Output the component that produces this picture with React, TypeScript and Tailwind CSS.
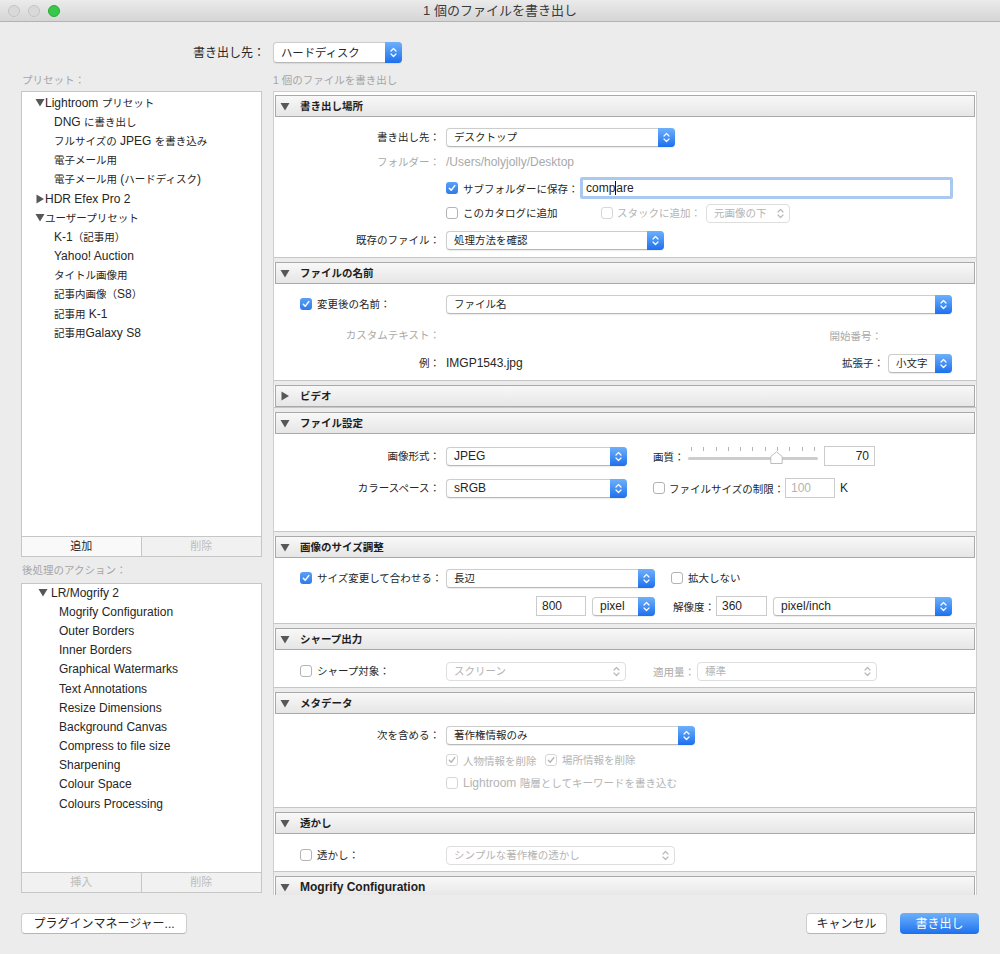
import React from "react";

type Kids = { children?: React.ReactNode };

// Japanese runs are set a little smaller than Latin, as in the macOS dialog
function M({ t }: { t: string }) {
  const parts = t.split(/([\u3000-\u30ff\u4e00-\u9fff\uff00-\uffef]+)/);
  return (
    <>
      {parts.map((p, i) =>
        i % 2 === 1 ? (
          <span key={i} className="text-[0.875em]">
            {p}
          </span>
        ) : (
          <React.Fragment key={i}>{p}</React.Fragment>
        )
      )}
    </>
  );
}

function Stepper({ disabled }: { disabled?: boolean }) {
  return (
    <div
      className={
        disabled
          ? "w-[17px] self-stretch flex items-center justify-center"
          : "w-[17px] -my-px -mr-px self-stretch rounded-r-[4px] bg-linear-to-b from-[#6db0fa] to-[#1b6fee] flex items-center justify-center"
      }
    >
      <svg width="7" height="11" viewBox="0 0 7 11" fill="none" stroke={disabled ? "#b9b9b9" : "#ffffff"} strokeWidth="1.2" strokeLinecap="round" strokeLinejoin="round">
        <path d="M1 4 3.5 1.5 6 4" />
        <path d="M1 7 3.5 9.5 6 7" />
      </svg>
    </div>
  );
}

function Popup({ w, label, disabled, tall }: { w: string; label: string; disabled?: boolean; tall?: boolean }) {
  return (
    <div
      className={`${w} ${tall ? "h-[21px]" : "h-[19px]"} shrink-0 flex items-center rounded-[4px] bg-white border ${
        disabled ? "border-[#dedede] text-[#b4b4b4]" : "border-[#cdcdcd] border-b-[#b8b8b8] text-[#262626] shadow-[0_0.5px_1px_rgba(0,0,0,0.08)]"
      }`}
    >
      <span className={`flex-1 pl-[7px] whitespace-nowrap ${tall ? "text-[13px]" : "text-[12px]"}`}>
        <M t={label} />
      </span>
      <Stepper disabled={disabled} />
    </div>
  );
}

function Check({ checked, disabled }: { checked?: boolean; disabled?: boolean }) {
  if (checked && !disabled) {
    return (
      <div className="w-[12px] h-[12px] shrink-0 rounded-[3px] bg-linear-to-b from-[#5aa0f7] to-[#2c7be9] flex items-center justify-center">
        <svg width="10" height="10" viewBox="0 0 10 10" fill="none" stroke="#fff" strokeWidth="1.5" strokeLinecap="round" strokeLinejoin="round">
          <path d="M2.3 5.3 4.2 7.3 7.8 2.6" />
        </svg>
      </div>
    );
  }
  return (
    <div
      className={`w-[12px] h-[12px] shrink-0 rounded-[3px] bg-white border flex items-center justify-center ${
        disabled ? "border-[#d6d6d6]" : "border-[#b3b3b3]"
      }`}
    >
      {checked && (
        <svg width="10" height="10" viewBox="0 0 10 10" fill="none" stroke="#b4b4b4" strokeWidth="1.4" strokeLinecap="round" strokeLinejoin="round">
          <path d="M2.3 5.3 4.2 7.3 7.8 2.6" />
        </svg>
      )}
    </div>
  );
}

function Field({ w, value, right, muted }: { w: string; value: string; right?: boolean; muted?: boolean }) {
  return (
    <div
      className={`${w} h-[20px] shrink-0 bg-white border border-[#cbcbcb] flex items-center px-[5px] text-[12px] ${right ? "justify-end" : ""} ${
        muted ? "text-[#b3b3b3]" : "text-[#262626]"
      }`}
    >
      {value}
    </div>
  );
}

function Label({ t, gray }: { t: string; gray?: boolean }) {
  return (
    <div className={`w-[166px] shrink-0 text-right text-[12px] whitespace-nowrap ${gray ? "text-[#a9a9a9]" : "text-[#262626]"}`}>
      <M t={t} />
    </div>
  );
}

function Txt({ t, cls = "" }: { t: string; cls?: string }) {
  return (
    <span className={`text-[12px] whitespace-nowrap shrink-0 ${cls}`}>
      <M t={t} />
    </span>
  );
}

function Tri({ open }: { open?: boolean }) {
  return open ? (
    <svg width="10" height="9" viewBox="0 0 10 9">
      <path d="M0.5 1 9.5 1 5 8.5Z" fill="#575757" />
    </svg>
  ) : (
    <svg width="10" height="10" viewBox="0 0 10 10">
      <path d="M1.5 0.5 9 5 1.5 9.5Z" fill="#575757" />
    </svg>
  );
}

function Section({ title, open = true, body, children }: Kids & { title: string; open?: boolean; body: string }) {
  return (
    <div>
      <div className="mx-[1px] h-[22px] border border-[#a9a9a9] bg-linear-to-b from-[#f8f8f8] to-[#e6e6e6] flex items-center pl-[4px]">
        <Tri open={open} />
        <span className="ml-[10px] mb-[1px] text-[12px] leading-[14px] font-bold text-[#1e1e1e] whitespace-nowrap">
          <M t={title} />
        </span>
      </div>
      {open && <div className={body}>{children}</div>}
      <div className="h-[5px] border-t border-[#c6c6c6] bg-[#ececec]" />
    </div>
  );
}

function Row({ h, children }: Kids & { h: string }) {
  return <div className={`${h} flex items-center`}>{children}</div>;
}

function Slider() {
  const ticks = Array.from({ length: 11 });
  return (
    <div className="relative w-[130px] h-[20px] shrink-0">
      <div className="absolute left-[3px] right-[3px] top-[1px] flex justify-between">
        {ticks.map((_, i) => (
          <span key={i} className="w-px h-[4px] bg-[#b4b4b4]" />
        ))}
      </div>
      <div className="absolute left-0 right-0 top-[11px] h-[3px] rounded-full bg-[#cdcdcd]" />
      <svg className="absolute left-[82px] top-[5px]" width="13" height="14" viewBox="0 0 13 14">
        <path d="M6.5 0.8 12.2 5.5 12.2 12.5 0.8 12.5 0.8 5.5Z" fill="#ffffff" stroke="#b5b5b5" strokeWidth="0.9" strokeLinejoin="round" />
      </svg>
    </div>
  );
}

function PresetList() {
  const rows: { t: string; kind: "open" | "closed" | "item" }[] = [
    { t: "Lightroom プリセット", kind: "open" },
    { t: "DNG に書き出し", kind: "item" },
    { t: "フルサイズの JPEG を書き込み", kind: "item" },
    { t: "電子メール用", kind: "item" },
    { t: "電子メール用 (ハードディスク)", kind: "item" },
    { t: "HDR Efex Pro 2", kind: "closed" },
    { t: "ユーザープリセット", kind: "open" },
    { t: "K-1（記事用）", kind: "item" },
    { t: "Yahoo! Auction", kind: "item" },
    { t: "タイトル画像用", kind: "item" },
    { t: "記事内画像（S8）", kind: "item" },
    { t: "記事用 K-1", kind: "item" },
    { t: "記事用Galaxy S8", kind: "item" },
  ];
  return (
    <div className="h-[446px] bg-white border border-[#c6c6c6] pt-[1px]">
      {rows.map((r) => (
        <div key={r.t} className="h-[19.2px] flex items-center text-[12px] text-[#262626] whitespace-nowrap">
          {r.kind === "item" ? (
            <span className="pl-[32px]">
              <M t={r.t} />
            </span>
          ) : (
            <>
              <span className="pl-[13px] w-[23px] flex">
                <Tri open={r.kind === "open"} />
              </span>
              <span>
                <M t={r.t} />
              </span>
            </>
          )}
        </div>
      ))}
    </div>
  );
}

function ActionList() {
  const items = [
    "Mogrify Configuration",
    "Outer Borders",
    "Inner Borders",
    "Graphical Watermarks",
    "Text Annotations",
    "Resize Dimensions",
    "Background Canvas",
    "Compress to file size",
    "Sharpening",
    "Colour Space",
    "Colours Processing",
  ];
  return (
    <div className="h-[290px] bg-white border border-[#c6c6c6]">
      <div className="h-[19.2px] mt-[-1px] flex items-center text-[12px] text-[#262626]">
        <span className="pl-[16px] w-[29px] flex">
          <Tri open />
        </span>
        <span>LR/Mogrify 2</span>
      </div>
      {items.map((t) => (
        <div key={t} className="h-[19.2px] flex items-center pl-[37px] text-[12px] text-[#262626] whitespace-nowrap">
          {t}
        </div>
      ))}
    </div>
  );
}

function ListButtons({ left, leftOn }: { left: string; leftOn?: boolean }) {
  return (
    <div className="flex border-x border-b border-[#c6c6c6] text-[11px]">
      <div
        className={`w-1/2 h-[19px] flex items-center justify-center border-r border-[#c6c6c6] ${
          leftOn ? "bg-[#f9f9f9] text-[#262626]" : "bg-[#f1f1f1] text-[#bdbdbd]"
        }`}
      >
        {left}
      </div>
      <div className="w-1/2 h-[19px] flex items-center justify-center bg-[#f1f1f1] text-[#bdbdbd]">削除</div>
    </div>
  );
}

export default function App() {
  return (
    <div className="w-[1000px] h-[954px] bg-[#ececec] overflow-hidden font-['Liberation_Sans','Noto_Sans_CJK_JP',sans-serif] text-[#262626]">
      {/* title bar */}
      <div className="relative h-[22px] bg-linear-to-b from-[#ebebeb] to-[#d5d5d5] border-b border-[#b3b3b3] flex items-center pl-[8px] gap-[8px]">
        <span className="w-[12px] h-[12px] rounded-full bg-[#d9d9d9] border border-[#c4c4c4]" />
        <span className="w-[12px] h-[12px] rounded-full bg-[#d9d9d9] border border-[#c4c4c4]" />
        <span className="w-[12px] h-[12px] rounded-full bg-[#35c84a] border border-[#2aab3a]" />
        <div className="absolute inset-0 flex items-center justify-center text-[13px] text-[#3b3b3b]">1 個のファイルを書き出し</div>
      </div>

      <div className="px-[21px]">
        {/* export target */}
        <div className="mt-[20px] flex items-center">
          <div className="w-[252px] pr-[8px] text-right text-[12px]">書き出し先：</div>
          <Popup w="w-[129px]" label="ハードディスク" tall />
        </div>

        <div className="h-[28px] pt-[10px] leading-[14px] flex gap-[11px] text-[10.5px] text-[#a5a5a5]">
          <div className="w-[241px] pl-[1px]">プリセット：</div>
          <div>1 個のファイルを書き出し</div>
        </div>

        <div className="flex gap-[11px] items-start">
          {/* left column */}
          <div className="w-[241px] shrink-0">
            <PresetList />
            <ListButtons left="追加" leftOn />
            <div className="h-[26px] pt-[6px] pl-[1px] leading-[14px] text-[10.5px] text-[#a5a5a5]">後処理のアクション：</div>
            <ActionList />
            <ListButtons left="挿入" />
          </div>

          {/* right column */}
          <div className="w-[704px] h-[804px] overflow-hidden bg-white border border-[#cfcfcf] border-b-0 pt-[3px]">
            <Section title="書き出し場所" body="h-[140px] pt-[8px]">
              <Row h="h-[24px]">
                <Label t="書き出し先：" />
                <div className="ml-[6px]">
                  <Popup w="w-[229px]" label="デスクトップ" />
                </div>
              </Row>
              <Row h="h-[26px]">
                <Label t="フォルダー：" gray />
                <span className="ml-[6px] text-[12px] text-[#a9a9a9]">/Users/holyjolly/Desktop</span>
              </Row>
              <Row h="h-[26px]">
                <div className="w-[172px] shrink-0" />
                <Check checked />
                <div className="ml-[5px] w-[117px] shrink-0">
                  <Txt t="サブフォルダーに保存：" />
                </div>
                <div className="w-[373px] h-[22px] border-[3px] border-[#a9c9f0] rounded-[2px] bg-white flex items-center pl-[3px] text-[12px]">
                  comp<span className="w-px h-[14px] bg-[#111]" />are
                </div>
              </Row>
              <Row h="h-[24px]">
                <div className="w-[172px] shrink-0" />
                <div className="w-[155px] flex items-center">
                  <Check />
                  <Txt t="このカタログに追加" cls="ml-[5px]" />
                </div>
                <div className="w-[105px] flex items-center">
                  <Check disabled />
                  <Txt t="スタックに追加：" cls="ml-[4px] text-[#b4b4b4]" />
                </div>
                <Popup w="w-[84px]" label="元画像の下" disabled />
              </Row>
              <Row h="h-[30px]">
                <Label t="既存のファイル：" />
                <div className="ml-[6px]">
                  <Popup w="w-[218px]" label="処理方法を確認" />
                </div>
              </Row>
            </Section>

            <Section title="ファイルの名前" body="h-[96px] pt-[8px]">
              <Row h="h-[24px]">
                <div className="w-[172px] shrink-0 pl-[26px] flex items-center">
                  <Check checked />
                  <Txt t="変更後の名前：" cls="ml-[5px]" />
                </div>
                <Popup w="w-[506px]" label="ファイル名" />
              </Row>
              <Row h="h-[38px]">
                <Label t="カスタムテキスト：" gray />
                <div className="ml-[6px] w-[506px] pr-[70px] text-right">
                  <Txt t="開始番号：" cls="text-[#a9a9a9]" />
                </div>
              </Row>
              <Row h="h-[18px]">
                <Label t="例：" />
                <div className="ml-[6px] w-[506px] flex items-center justify-between">
                  <span className="text-[12px]">IMGP1543.jpg</span>
                  <div className="flex items-center">
                    <Txt t="拡張子：" cls="mr-[4px]" />
                    <Popup w="w-[64px]" label="小文字" />
                  </div>
                </div>
              </Row>
            </Section>

            <Section title="ビデオ" open={false} body="" />

            <Section title="ファイル設定" body="h-[97px] pt-[10px]">
              <Row h="h-[24px]">
                <Label t="画像形式：" />
                <div className="ml-[6px]">
                  <Popup w="w-[181px]" label="JPEG" />
                </div>
                <div className="ml-[26px] w-[35px] shrink-0">
                  <Txt t="画質：" />
                </div>
                <Slider />
                <div className="ml-[6px]">
                  <Field w="w-[51px]" value="70" right />
                </div>
              </Row>
              <Row h="h-[40px]">
                <Label t="カラースペース：" />
                <div className="ml-[6px]">
                  <Popup w="w-[181px]" label="sRGB" />
                </div>
                <div className="ml-[26px]">
                  <Check />
                </div>
                <div className="ml-[4px] w-[116px] shrink-0">
                  <Txt t="ファイルサイズの制限：" />
                </div>
                <Field w="w-[50px]" value="100" muted />
                <span className="ml-[5px] text-[12px]">K</span>
              </Row>
            </Section>

            <Section title="画像のサイズ調整" body="h-[65px] pt-[8px]">
              <Row h="h-[24px]">
                <div className="w-[172px] shrink-0 pl-[26px] flex items-center">
                  <Check checked />
                  <Txt t="サイズ変更して合わせる：" cls="ml-[5px]" />
                </div>
                <Popup w="w-[209px]" label="長辺" />
                <div className="ml-[16px]">
                  <Check />
                </div>
                <Txt t="拡大しない" cls="ml-[5px]" />
              </Row>
              <Row h="h-[32px]">
                <div className="w-[262px] shrink-0" />
                <Field w="w-[50px]" value="800" />
                <div className="ml-[6px]">
                  <Popup w="w-[63px]" label="pixel" />
                </div>
                <div className="ml-[18px] w-[43px] shrink-0">
                  <Txt t="解像度：" />
                </div>
                <Field w="w-[51px]" value="360" />
                <div className="ml-[6px]">
                  <Popup w="w-[179px]" label="pixel/inch" />
                </div>
              </Row>
            </Section>

            <Section title="シャープ出力" body="h-[37px] pt-[9px]">
              <Row h="h-[24px]">
                <div className="w-[172px] shrink-0 pl-[26px] flex items-center">
                  <Check />
                  <Txt t="シャープ対象：" cls="ml-[5px]" />
                </div>
                <Popup w="w-[180px]" label="スクリーン" disabled />
                <div className="ml-[27px] w-[44px] shrink-0">
                  <Txt t="適用量：" cls="text-[#a9a9a9]" />
                </div>
                <Popup w="w-[180px]" label="標準" disabled />
              </Row>
            </Section>

            <Section title="メタデータ" body="h-[93px] pt-[9px]">
              <Row h="h-[24px]">
                <Label t="次を含める：" />
                <div className="ml-[6px]">
                  <Popup w="w-[249px]" label="著作権情報のみ" />
                </div>
              </Row>
              <Row h="h-[26px]">
                <div className="w-[172px] shrink-0" />
                <Check checked disabled />
                <div className="ml-[5px] w-[82px] shrink-0">
                  <Txt t="人物情報を削除" cls="text-[#b4b4b4]" />
                </div>
                <Check checked disabled />
                <Txt t="場所情報を削除" cls="ml-[5px] text-[#b4b4b4]" />
              </Row>
              <Row h="h-[20px]">
                <div className="w-[172px] shrink-0" />
                <Check disabled />
                <Txt t="Lightroom 階層としてキーワードを書き込む" cls="ml-[5px] text-[#b4b4b4]" />
              </Row>
            </Section>

            <Section title="透かし" body="h-[37px] pt-[9px]">
              <Row h="h-[24px]">
                <div className="w-[172px] shrink-0 pl-[26px] flex items-center">
                  <Check />
                  <Txt t="透かし：" cls="ml-[5px]" />
                </div>
                <Popup w="w-[229px]" label="シンプルな著作権の透かし" disabled />
              </Row>
            </Section>

            <Section title="Mogrify Configuration" body="h-[60px]" />
          </div>
        </div>

        {/* bottom buttons */}
        <div className="mt-[18px] flex items-center">
          <div className="w-[166px] h-[21px] rounded-[4px] bg-white border border-[#cdcdcd] border-b-[#b5b5b5] flex items-center justify-center text-[12px]">
            プラグインマネージャー...
          </div>
          <div className="flex-1" />
          <div className="w-[81px] h-[21px] rounded-[4px] bg-white border border-[#cdcdcd] border-b-[#b5b5b5] flex items-center justify-center text-[12px]">
            キャンセル
          </div>
          <div className="ml-[13px] w-[79px] h-[21px] rounded-[4px] bg-linear-to-b from-[#6cb0fa] to-[#1a70ee] flex items-center justify-center text-[12px] text-white">
            書き出し
          </div>
        </div>
      </div>
    </div>
  );
}
